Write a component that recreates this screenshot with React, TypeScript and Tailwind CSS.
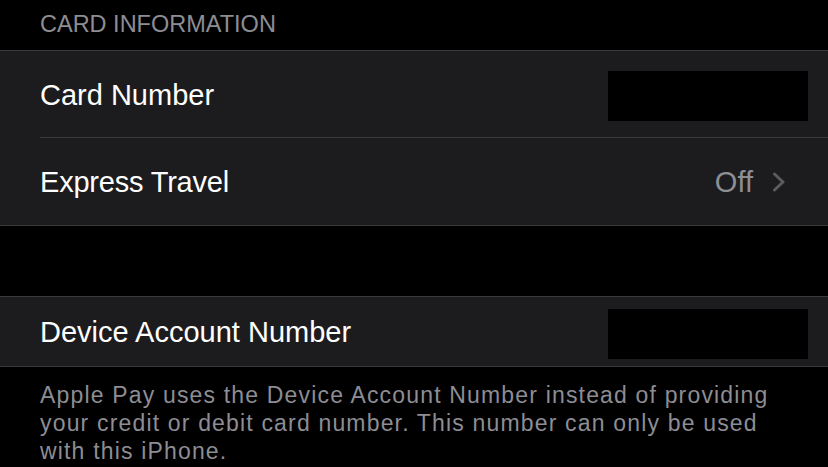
export default function App() {
  return (
    <div
      className="w-[828px] h-[467px] overflow-hidden bg-black text-white"
      style={{ fontFamily: '"Liberation Sans", Arial, sans-serif' }}
    >
      {/* Section header */}
      <div className="h-[50px] pl-[40px] pt-[13px] text-[23.5px] leading-[23.5px] text-[#8d8d93]">
        CARD INFORMATION
      </div>

      {/* Card group */}
      <div className="bg-[#1c1c1e] border-y border-[#3a3a3c]">
        <div className="flex items-center justify-between h-[86px] pl-[40px] pr-[20px]">
          <span className="text-[29px] leading-none pt-[2px]">Card Number</span>
          <div className="w-[200px] h-[50px] mt-[4px] bg-black" />
        </div>
        <div className="ml-[40px] h-px bg-[#3a3a3c]" />
        <div className="flex items-center justify-between h-[87px] pl-[40px] pr-[42px]">
          <span className="text-[29px] leading-none pt-[2px] tracking-[-0.2px]">Express Travel</span>
          <div className="flex items-center gap-[19px]">
            <span className="text-[29px] leading-none pt-[2px] text-[#8e8e93]">Off</span>
            <svg width="14" height="20" viewBox="0 0 14 20" fill="none">
              <path
                d="M2.5 2 L11 10 L2.5 18"
                stroke="#5b5b60"
                strokeWidth="3"
                strokeLinecap="round"
                strokeLinejoin="round"
              />
            </svg>
          </div>
        </div>
      </div>

      <div className="h-[70px]" />

      {/* Device account group */}
      <div className="bg-[#1c1c1e] border-y border-[#3a3a3c]">
        <div className="flex items-center justify-between h-[69px] pl-[40px] pr-[20px]">
          <span className="text-[29px] leading-none pt-[2px]">Device Account Number</span>
          <div className="w-[200px] h-[50px] mt-[4px] bg-black" />
        </div>
      </div>

      <p className="pl-[40px] pt-[14px] text-[23px] leading-[28px] tracking-[1.17px] whitespace-nowrap text-[#8d8d93]">
        Apple Pay uses the Device Account Number instead of providing
        <br />
        your credit or debit card number. This number can only be used
        <br />
        with this iPhone.
      </p>
    </div>
  );
}
